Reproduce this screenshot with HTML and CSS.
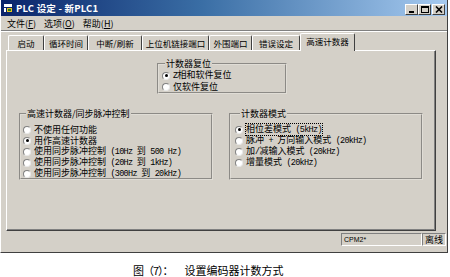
FILE: index.html
```html
<!DOCTYPE html>
<html lang="zh">
<head>
<meta charset="utf-8">
<title>PLC 设定</title>
<link rel="stylesheet" href="styles.css">
</head>
<body>
<div class="screen">
  <div class="window">
    <div class="titlebar">
      <svg class="appicon" width="10" height="10" viewBox="0 0 10 10">
        <rect x="0" y="0" width="10" height="10" fill="#0a246a"/>
        <rect x="1" y="1" width="8" height="3" fill="#ffffff"/>
        <rect x="1" y="5" width="2" height="4" fill="#ffffff"/>
        <rect x="4" y="5" width="5" height="4" fill="#e8c020"/>
        <rect x="5" y="6" width="3" height="2" fill="#208020"/>
      </svg>
      <span class="title">PLC 设定 - 新PLC1</span>
      <div class="tbtns">
        <span class="tbtn"><svg width="8" height="7" viewBox="0 0 8 7"><rect x="1" y="5" width="5" height="2" fill="#000"/></svg></span>
        <span class="tbtn"><svg width="8" height="7" viewBox="0 0 8 7"><rect x="0.5" y="0.5" width="7" height="6" fill="none" stroke="#000"/><rect x="0" y="0" width="8" height="2" fill="#000"/></svg></span>
        <span class="tbtn close"><svg width="8" height="7" viewBox="0 0 8 7"><path d="M1 0.5 L7 6.5 M7 0.5 L1 6.5" stroke="#000" stroke-width="1.6"/></svg></span>
      </div>
    </div>
    <div class="menubar">
      <span class="menu">文件(<u>F</u>)</span>
      <span class="menu">选项(<u>O</u>)</span>
      <span class="menu">帮助(<u>H</u>)</span>
    </div>
    <div class="tabs">
      <div class="tab t1">启动</div>
      <div class="tab t2">循环时间</div>
      <div class="tab t3">中断/刷新</div>
      <div class="tab t4">上位机链接端口</div>
      <div class="tab t5">外围端口</div>
      <div class="tab t6">错误设定</div>
      <div class="tab t7 active">高速计数器</div>
    </div>
    <div class="panel">
      <fieldset class="grp reset">
        <legend>计数器复位</legend>
        <div class="opt"><span class="radio on"></span><span class="lbl"><span class="en">Z</span>相和软件复位</span></div>
        <div class="opt"><span class="radio"></span><span class="lbl">仅软件复位</span></div>
      </fieldset>
      <div class="row">
        <fieldset class="grp sync">
          <legend>高速计数器/同步脉冲控制</legend>
          <div class="opt"><span class="radio"></span><span class="lbl">不使用任何功能</span></div>
          <div class="opt"><span class="radio on"></span><span class="lbl">用作高速计数器</span></div>
          <div class="opt"><span class="radio"></span><span class="lbl">使用同步脉冲控制<span class="en"> (10Hz </span>到<span class="en"> 500 Hz)</span></span></div>
          <div class="opt"><span class="radio"></span><span class="lbl">使用同步脉冲控制<span class="en"> (20Hz </span>到<span class="en"> 1kHz)</span></span></div>
          <div class="opt"><span class="radio"></span><span class="lbl">使用同步脉冲控制<span class="en"> (300Hz </span>到<span class="en"> 20kHz)</span></span></div>
        </fieldset>
        <fieldset class="grp mode">
          <legend>计数器模式</legend>
          <div class="opt"><span class="radio on"></span><span class="lbl focus">相位差模式<span class="en"> (5kHz)</span></span></div>
          <div class="opt"><span class="radio"></span><span class="lbl">脉冲<span class="en"> + </span>方向输入模式<span class="en"> (20kHz)</span></span></div>
          <div class="opt"><span class="radio"></span><span class="lbl">加<span class="en">/</span>减输入模式<span class="en"> (20kHz)</span></span></div>
          <div class="opt"><span class="radio"></span><span class="lbl">增量模式<span class="en"> (20kHz)</span></span></div>
        </fieldset>
      </div>
    </div>
    <div class="status">
      <div class="cell model">CPM2*</div>
      <div class="cell off">离线</div>
    </div>
  </div>
  <div class="caption"><span class="cap-a">图（7）：</span><span class="cap-b">设置编码器计数方式</span></div>
</div>
</body>
</html>
```
FILE: styles.css
```css
* { box-sizing: border-box; }
html, body { margin: 0; padding: 0; background: #ffffff; }
body {
  font-family: "Noto Sans CJK SC", "Noto Sans", sans-serif;
  font-size: 9px;
  color: #000;
}
.screen { width: 450px; height: 277px; overflow: hidden; }
.window {
  width: 448px;
  height: 253px;
  background: #d4d0c8;
  border-right: 1px solid #404040;
  border-bottom: 1px solid #404040;
  border-left: 1px solid #ffffff;
  display: flex;
  flex-direction: column;
}
.titlebar {
  height: 16px;
  background: linear-gradient(to right, #0a246a 0%, #3a6ea5 45%, #a6caf0 100%);
  display: flex;
  align-items: center;
  padding: 0 2px 0 2px;
  gap: 3px;
}
.appicon { flex: none; }
.title {
  color: #fff;
  font-weight: 700;
  font-size: 9.5px;
  line-height: 14px;
  letter-spacing: 0.2px;
}
.tbtns { margin-left: auto; display: flex; padding-top: 2px; }
.tbtn {
  width: 13px;
  height: 11px;
  background: #d4d0c8;
  border: 1px solid;
  border-color: #ffffff #404040 #404040 #ffffff;
  display: flex;
  align-items: center;
  justify-content: center;
}
.tbtn.close { margin-left: 1px; }
.menubar {
  height: 15px;
  display: flex;
  align-items: center;
  padding-left: 6px;
  gap: 8px;
  border-bottom: 1px solid #808080;
  box-shadow: 0 1px 0 #ffffff;
}
.menu { line-height: 13px; font-size: 9px; }
.menu u { text-decoration: underline; }
.tabs {
  height: 18px;
  display: flex;
  align-items: flex-end;
  padding-left: 7px;
  margin-top: 1px;
}
.tab {
  height: 15px;
  font-size: 8.5px;
  line-height: 14px;
  text-align: center;
  border-left: 1px solid #ffffff;
  border-top: 1px solid #ffffff;
  border-right: 1px solid #404040;
  border-top-left-radius: 2px;
  border-top-right-radius: 2px;
}
.t1 { width: 36px; }
.t2 { width: 44px; }
.t3 { width: 54px; }
.t4 { width: 67px; }
.t5 { width: 43px; }
.t6 { width: 48px; }
.t7 { width: 55px; }
.tab.active {
  height: 18px;
  margin-bottom: -1px;
  position: relative;
  z-index: 1;
  background: #d4d0c8;
  line-height: 15px;
}
.panel {
  margin-left: 5px;
  width: 430px;
  height: 181px;
  border: 1px solid;
  border-color: #ffffff #404040 #404040 #ffffff;
  box-shadow: inset -1px -1px 0 #808080;
  display: flex;
  flex-direction: column;
  align-items: flex-start;
}
.grp {
  margin: 0;
  padding: 0 0 0 2px;
  border: 2px groove #e0ddd6;
  min-width: 0;
}
.grp legend {
  padding: 0 1px;
  margin-left: 3px;
  line-height: 11px;
  font-size: 9px;
}
.reset {
  margin-top: 7px;
  margin-left: 150px;
  width: 130px;
  height: 36px;
  padding-left: 3px;
  padding-top: 1px;
}
.row {
  margin-top: 14px;
  margin-left: 12px;
  display: flex;
  gap: 16px;
}
.sync { width: 194px; height: 72px; padding-left: 2px; padding-top: 5px; }
.mode { width: 194px; height: 72px; padding-left: 4px; padding-top: 5px; }
.mode legend { margin-left: 5px; }
.opt {
  height: 11px;
  display: flex;
  align-items: center;
  gap: 3px;
  white-space: nowrap;
  line-height: 11px;
}
.lbl { white-space: pre; }
.en {
  font-family: "Liberation Mono", monospace;
  font-size: 8.5px;
  letter-spacing: -0.7px;
}
.radio {
  flex: none;
  width: 8px;
  height: 8px;
  border-radius: 50%;
  background: #ffffff;
  border: 1px solid;
  border-color: #808080 #e8e8e8 #e8e8e8 #808080;
  display: flex;
  align-items: center;
  justify-content: center;
}
.radio.on::after {
  content: "";
  width: 3px;
  height: 3px;
  border-radius: 50%;
  background: #000;
}
.focus { outline: 1px dotted #000; outline-offset: 0; line-height: 10px; }
.status {
  margin-top: 2px;
  display: flex;
  justify-content: flex-end;
  padding-right: 1px;
}
.cell {
  height: 13px;
  border: 1px solid;
  border-color: #808080 #ffffff #ffffff #808080;
  line-height: 11px;
}
.model {
  width: 81px;
  font-family: "Liberation Sans", sans-serif;
  font-size: 7px;
  padding-left: 2px;
}
.off { width: 24px; text-align: center; font-size: 9px; }
.caption {
  margin-top: 10px;
  padding-left: 133px;
  font-size: 11px;
  line-height: 14px;
  white-space: pre;
  display: flex;
}
.cap-a { letter-spacing: -1px; }
.cap-b { margin-left: 12px; }
```
